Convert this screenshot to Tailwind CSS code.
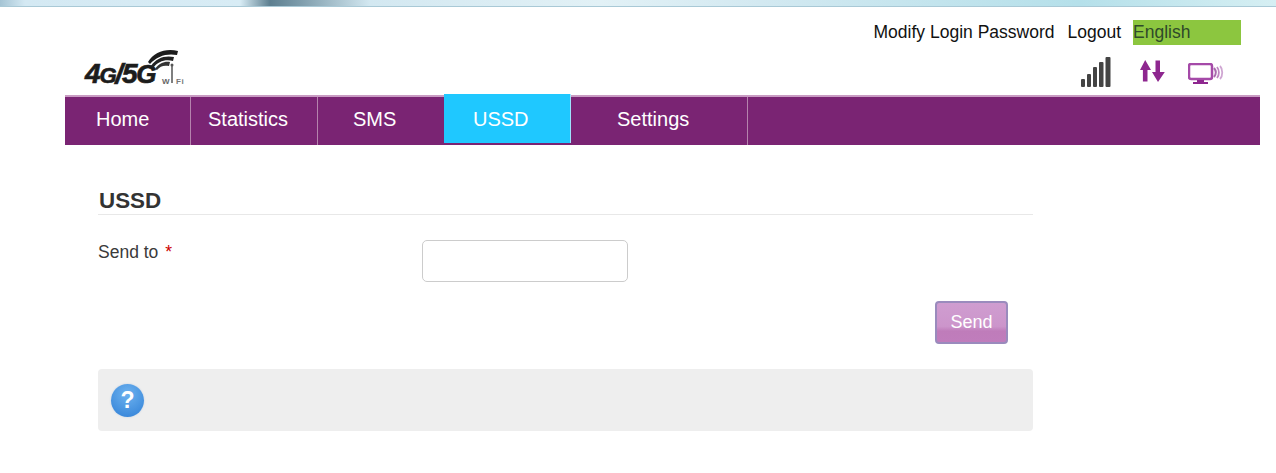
<!DOCTYPE html>
<html lang="en">
<head>
  <meta charset="UTF-8" />
  <title>USSD</title>
  <script src="https://cdn.jsdelivr.net/npm/@tailwindcss/browser@4"></script>
</head>
<body class="bg-white font-['Liberation_Sans',Arial,sans-serif] text-[#333] overflow-hidden">

  <!-- background strip -->
  <div class="h-[7px] border-b border-[#a9c9d6] bg-[linear-gradient(90deg,#a5c4d4_0px,#d4e9f3_25px,#d8ecf5_240px,#5d7f90_270px,#7d9cab_300px,#d3e8f1_370px,#e2f1f6_600px,#d3e9f1_760px,#b5e0ea_1080px,#d6eff3_1276px)]"></div>

  <div class="ml-[65px] w-[1195px]">
    <!-- header -->
    <header class="h-[88px] flex justify-between">
      <div class="pl-[19px] pt-[41px]">
        <div class="relative w-[104px] h-[40px]">
          <span class="absolute left-px top-[11px] text-[28px] leading-[30px] font-bold italic tracking-[-1.2px] text-[#1c1c1c] whitespace-nowrap [-webkit-text-stroke:0.7px_#1c1c1c]">4<span class="text-[22px]">G</span>/5<span class="text-[26px]">G</span></span>
          <svg class="absolute left-0 top-0" width="104" height="40" viewBox="0 0 104 40" fill="none">
            <path d="M64 14 C70 4 82 0 94 3 L93 7 C83 5 73 8 66 16Z" fill="#1c1c1c" />
            <path d="M67 18 C72 10 81 7 90 9 L89 13 C82 11 74 13 69 20Z" fill="#222" />
            <path d="M71 21 C75 15 81 13 86 14 L85 18 C80 17 76 18 73 22Z" fill="#333" />
            <path d="M88 18 V35" stroke="#555" stroke-width="1.5" />
            <circle cx="88" cy="17" r="1.5" fill="#555" />
          </svg>
          <span class="absolute left-[78px] top-[30px] text-[8px] leading-[8px] font-bold tracking-[0.5px] text-[#666]">W</span>
          <span class="absolute left-[92px] top-[30px] text-[8px] leading-[8px] font-bold tracking-[0.5px] text-[#777]">Fi</span>
        </div>
      </div>

      <div class="flex flex-col items-end pr-[19px]">
        <div class="flex items-start pt-[13px] text-[17.5px] leading-[25px] text-[#111]">
          <a>Modify Login Password</a>
          <a class="ml-[13px]">Logout</a>
          <div class="ml-[12px] w-[108px] h-[25px] bg-[#8cc63f] text-[#2f4a2a]">English</div>
        </div>
        <div class="flex items-end pt-[12px] pr-[17px]">
          <!-- signal -->
          <svg width="30" height="30" viewBox="0 0 30 30" fill="#444">
            <rect x="0" y="22" width="4" height="8" rx="1" />
            <rect x="6" y="17" width="4" height="13" rx="1" />
            <rect x="12" y="10" width="4" height="20" rx="1" />
            <rect x="18" y="5" width="4.5" height="25" rx="1" />
            <rect x="24.5" y="0" width="5" height="30" rx="1" />
          </svg>
          <!-- data arrows -->
          <svg class="ml-[29px] mb-[5px]" width="25" height="22" viewBox="0 0 25 22" fill="#8e278f">
            <path d="M5.200 0 L11 10 H7.500 V21.500 H2.900 V10 H0Z" />
            <path d="M15.500 0.500 H20 V12 H24.800 L18 22 L12 12 H15.500Z" />
          </svg>
          <!-- device -->
          <svg class="ml-[23px] mb-[3px]" width="36" height="21" viewBox="0 0 36 21" fill="none">
            <rect x="1" y="1" width="23" height="15" rx="2" stroke="#a54aa8" stroke-width="2.500" />
            <path d="M9 18 H16 M5 20 H20" stroke="#8e278f" stroke-width="2.200" />
            <path d="M26 5 C28.500 8 28.500 11 26 14" stroke="#a96aad" stroke-width="2" />
            <path d="M29 4 C31.500 7 31.500 12 29 15" stroke="#bd85c1" stroke-width="1.800" />
            <path d="M32 3 C35 6 35 13 32 16" stroke="#cfa6d2" stroke-width="1.800" />
          </svg>
        </div>
      </div>
    </header>

    <!-- nav -->
    <nav class="h-[50px] flex bg-[#7a2473] border-t-2 border-[#c99cc3] text-white text-[20px] leading-[24px]">
      <a class="w-[126px] flex items-center pl-[31px] pb-[4px] border-r border-[#b583ad]">Home</a>
      <a class="w-[127px] flex items-center pl-[17px] pb-[4px] border-r border-[#b583ad]">Statistics</a>
      <a class="w-[126px] flex items-center pl-[35px] pb-[4px]">SMS</a>
      <a class="relative -top-[3px] w-[127px] h-[49px] flex items-center pl-[29px] bg-[#1fc8ff] border-r border-[#9fe3fb]">USSD</a>
      <a class="w-[177px] flex items-center pl-[46px] pb-[4px] border-r border-[#b583ad]">Settings</a>
    </nav>

    <!-- content -->
    <main class="pl-[33px] w-[968px] pt-[42px]">
      <h1 class="text-[22.4px] leading-[27px] font-bold text-[#333] border-b border-[#e8e8e8] h-[28px] pl-px">USSD</h1>

      <div class="flex pt-[25px]">
        <label class="w-[324px] text-[17.5px] leading-[24px] text-[#3a3a3a]">Send to <span class="text-[#c00] ml-[2px]">*</span></label>
        <input type="text" class="w-[206px] h-[42px] bg-white border border-[#ccc] rounded-[5px]" />
      </div>

      <div class="flex justify-end pr-[25px] pt-[19px]">
        <button class="w-[73px] h-[43px] rounded-[4px] border-2 border-[#9a8bbd] bg-[linear-gradient(180deg,#cf9dd0_0%,#cc95cb_60%,#bf7cba_72%,#c07dbc_100%)] text-white text-[18px]">Send</button>
      </div>

      <div class="mt-[25px] h-[62px] bg-[#eeeeee] rounded-[4px] flex items-center pl-[13px]">
        <div class="w-[33px] h-[33px] rounded-full bg-[radial-gradient(circle_at_50%_30%,#6db2ef,#2f7fd6)] flex items-center justify-center text-white text-[23px] leading-[30px] pb-px font-bold shadow-[0_0_2px_#b9cbe0]">?</div>
      </div>
    </main>
  </div>
</body>
</html>
